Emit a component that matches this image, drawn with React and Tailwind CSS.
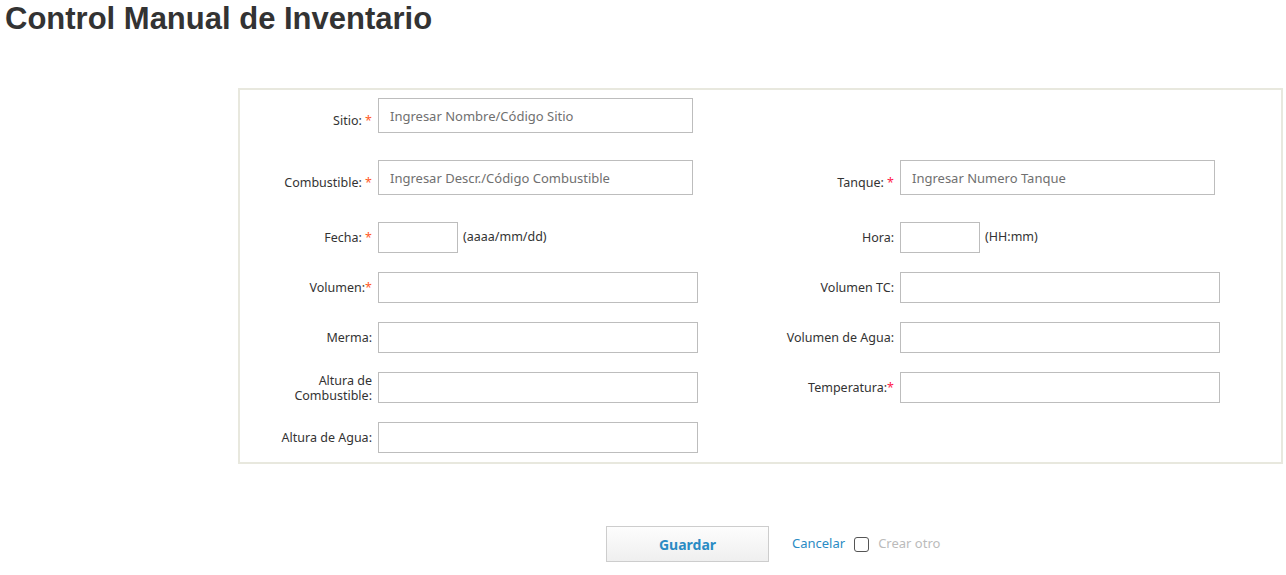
import React from "react";

const FONT = { fontFamily: '"Noto Sans", "DejaVu Sans", sans-serif' };

function Req({ pink, space = true }) {
  return (
    <span className={pink ? "text-[#ff1a4b]" : "text-[#ff5a1f]"}>
      {space ? "\u00a0" : ""}*
    </span>
  );
}

function Field({ label, req, pink, space, right, w = "w-[320px]", h = "h-[31px]", placeholder, hint, labelPad = "", lead = "leading-[14px]" }) {
  return (
    <div className={`flex items-center ${right ? "flex-1 pl-[1px]" : "w-[521px] shrink-0"}`}>
      <div className={`w-[132px] shrink-0 text-right text-[12.5px] ${lead} text-[#333] ${labelPad}`}>
        {label}
        {req && <Req pink={pink} space={space} />}
      </div>
      <div className="ml-[6px] flex items-center">
        <input
          className={`${w} ${h} border border-[#bdbdbd] bg-white px-[11px] text-[13px] text-[#333] placeholder-[#707070] outline-none`}
          placeholder={placeholder}
          style={FONT}
        />
        {hint && <span className="ml-[5px] text-[12.5px] text-[#333]">{hint}</span>}
      </div>
    </div>
  );
}

export default function App() {
  return (
    <div className="w-[1286px] h-[575px] bg-white" style={FONT}>
      <h1
        className="pl-[5px] pt-[1px] text-[31px] leading-[35px] font-bold text-[#333]"
        style={{ fontFamily: '"Liberation Sans", Arial, sans-serif' }}
      >
        Control Manual de Inventario
      </h1>
      <div className="mt-[52px] ml-[238px] w-[1045px] h-[376px] border-2 border-[#e8e8de] pt-[8px]">
        <div className="flex">
          <Field label="Sitio:" req w="w-[315px]" h="h-[35px]" placeholder="Ingresar Nombre/Código Sitio" labelPad="pt-[10px]" />
        </div>
        <div className="flex mt-[27px]">
          <Field label="Combustible:" req w="w-[315px]" h="h-[35px]" placeholder="Ingresar Descr./Código Combustible" labelPad="pt-[10px]" />
          <Field right label="Tanque:" req pink w="w-[315px]" h="h-[35px]" placeholder="Ingresar Numero Tanque" labelPad="pt-[10px]" />
        </div>
        <div className="flex mt-[27px]">
          <Field label="Fecha:" req w="w-[80px]" hint="(aaaa/mm/dd)" />
          <Field right label="Hora:" w="w-[80px]" hint="(HH:mm)" />
        </div>
        <div className="flex mt-[19px]">
          <Field label="Volumen:" req space={false} />
          <Field right label="Volumen TC:" />
        </div>
        <div className="flex mt-[19px]">
          <Field label="Merma:" />
          <Field right label="Volumen de Agua:" />
        </div>
        <div className="flex mt-[19px]">
          <Field label={<>Altura de<br />Combustible:</>} lead="leading-[15px]" />
          <Field right label="Temperatura:" req pink space={false} />
        </div>
        <div className="flex mt-[19px]">
          <Field label="Altura de Agua:" />
        </div>
      </div>
      <div className="mt-[62px] pl-[606px] flex items-center">
        <button className="w-[163px] h-[36px] border border-[#cdcdcd] bg-gradient-to-b from-[#fdfdfd] to-[#efefef] text-[14px] font-bold text-[#2a8bc4]">
          Guardar
        </button>
        <span className="ml-[23px] text-[13px] text-[#2a8bc4]">Cancelar</span>
        <span className="ml-[9px] w-[15px] h-[15px] rounded-[3px] border border-[#555] bg-white" />
        <span className="ml-[9px] text-[13px] text-[#bbb]">Crear otro</span>
      </div>
    </div>
  );
}
